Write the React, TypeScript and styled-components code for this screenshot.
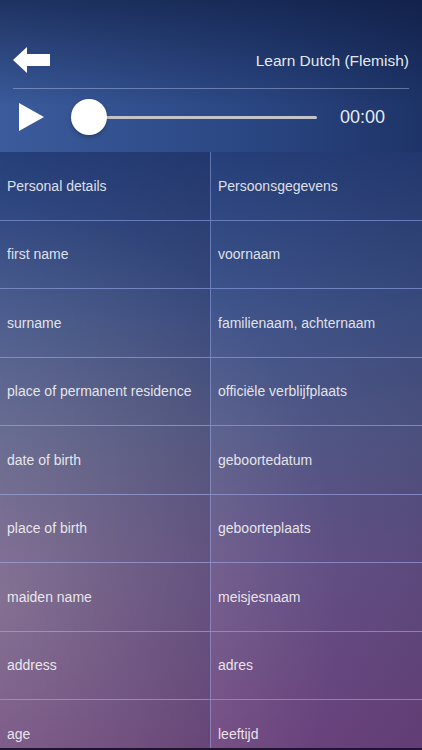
import styled, { createGlobalStyle } from "styled-components";

const rows = [
  ["Personal details", "Persoonsgegevens"],
  ["first name", "voornaam"],
  ["surname", "familienaam, achternaam"],
  ["place of permanent residence", "officiële verblijfplaats"],
  ["date of birth", "geboortedatum"],
  ["place of birth", "geboorteplaats"],
  ["maiden name", "meisjesnaam"],
  ["address", "adres"],
  ["age", "leeftijd"],
];

const GlobalStyle = createGlobalStyle`
  html, body {
    margin: 0;
    padding: 0;
    background: #1c1530;
  }
  body {
    font-family: "Liberation Sans", Arial, sans-serif;
  }
`;

const BackArrow = () => (
  <svg width="37" height="26" viewBox="0 0 37 26">
    <path d="M0 13 L14 0 L14 7 L37 7 L37 19 L14 19 L14 26 Z" fill="#fff" />
  </svg>
);

const PlayIcon = () => (
  <svg width="25" height="28" viewBox="0 0 25 28">
    <path d="M0 0 L25 14 L0 28 Z" fill="#fff" />
  </svg>
);

export default function App() {
  return (
    <>
      <GlobalStyle />
      <Page>
        <Header>
          <TopBar>
            <IconButton aria-label="back">
              <BackArrow />
            </IconButton>
            <Title>Learn Dutch (Flemish)</Title>
          </TopBar>
          <Divider />
          <Player>
            <IconButton aria-label="play">
              <PlayIcon />
            </IconButton>
            <Slider>
              <Track />
              <Thumb />
            </Slider>
            <Time>00:00</Time>
          </Player>
        </Header>
        <Table>
          {rows.map(([en, nl]) => (
            <Row key={en}>
              <Cell>{en}</Cell>
              <Cell>{nl}</Cell>
            </Row>
          ))}
        </Table>
      </Page>
    </>
  );
}

const Page = styled.div`
  width: 422px;
  height: 748px;
  overflow: hidden;
  background:
    radial-gradient(
      ellipse 340px 400px at 0% 80%,
      rgba(190, 180, 175, 0.38),
      rgba(190, 180, 175, 0) 100%
    ),
    linear-gradient(
      to bottom,
      #1d3266 0%,
      #284584 20%,
      #465e98 42%,
      #5e6699 58%,
      #745d98 76%,
      #7c4d8e 100%
    );
`;

const Header = styled.header`
  height: 152px;
  box-sizing: border-box;
  padding: 45px 13px 0 13px;
  background:
    linear-gradient(to bottom, rgba(8, 18, 50, 0.55), rgba(8, 18, 50, 0) 70%),
    linear-gradient(to right, #3b5b9c, #2a4682 60%, #1e3468);
`;

const TopBar = styled.div`
  display: flex;
  align-items: center;
  justify-content: space-between;
  height: 30px;
`;

const IconButton = styled.button`
  border: none;
  background: none;
  padding: 0;
  margin: 0;
  display: flex;
  align-items: center;
  cursor: pointer;
`;

const Title = styled.span`
  color: rgba(255, 255, 255, 0.9);
  font-size: 15.5px;
  margin-top: 2px;
`;

const Divider = styled.div`
  height: 1px;
  margin-top: 13px;
  background: rgba(180, 195, 235, 0.45);
`;

const Player = styled.div`
  display: flex;
  align-items: center;
  height: 56px;
  padding-left: 6px;
`;

const Slider = styled.div`
  position: relative;
  width: 246px;
  height: 36px;
  margin-left: 27px;
  display: flex;
  align-items: center;
`;

const Track = styled.div`
  margin-left: 18px;
  flex: 1;
  height: 3px;
  border-radius: 2px;
  background: #c4c4c8;
`;

const Thumb = styled.div`
  position: absolute;
  left: 0;
  top: 0;
  width: 36px;
  height: 36px;
  border-radius: 50%;
  background: #fff;
  box-shadow: 0 2px 4px rgba(0, 0, 0, 0.25);
`;

const Time = styled.span`
  margin-left: 23px;
  color: rgba(255, 255, 255, 0.92);
  font-size: 18px;
`;

const Table = styled.div`
  display: flex;
  flex-direction: column;
`;

const Row = styled.div`
  display: grid;
  grid-template-columns: 211px 1fr;
  height: 68.5px;
  flex-shrink: 0;
  box-sizing: border-box;
  border-bottom: 1px solid rgba(165, 180, 245, 0.45);
`;

const Cell = styled.div`
  display: flex;
  align-items: center;
  padding-left: 7px;
  color: rgba(255, 255, 255, 0.85);
  font-size: 14px;
  background: linear-gradient(
    to right,
    rgba(15, 10, 35, 0.1),
    rgba(15, 10, 35, 0.24)
  );

  &:first-child {
    border-right: 1px solid rgba(165, 180, 245, 0.45);
  }
`;
